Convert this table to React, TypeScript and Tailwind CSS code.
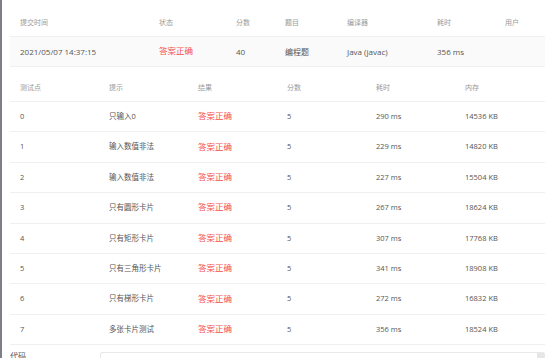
import React from 'react';

const font = { fontFamily: '"Open Sans", "Noto Sans CJK SC", sans-serif' };

const topHead = ['提交时间', '状态', '分数', '题目', '编译器', '耗时', '用户'];

const cases = [
  ['0', '只输入0', '5', '290 ms', '14536 KB'],
  ['1', '输入数值非法', '5', '229 ms', '14820 KB'],
  ['2', '输入数值非法', '5', '227 ms', '15504 KB'],
  ['3', '只有圆形卡片', '5', '267 ms', '18624 KB'],
  ['4', '只有矩形卡片', '5', '307 ms', '17768 KB'],
  ['5', '只有三角形卡片', '5', '341 ms', '18908 KB'],
  ['6', '只有梯形卡片', '5', '272 ms', '16832 KB'],
  ['7', '多张卡片测试', '5', '356 ms', '18524 KB'],
];

const topCols = 'grid grid-cols-[139px_77px_49px_62px_90px_68px_1fr] pl-[10px] items-center';
const caseCols = 'grid grid-cols-[89px_89px_89px_89px_89px_1fr] pl-[10px] items-center';

// red verdict text
const verdict = <span className="text-[8.5px] text-[#f5504f]">答案正确</span>;

export default function App() {
  return (
    <div className="w-[554px] h-[358px] overflow-hidden bg-white flex" style={font}>
      <div className="w-[2px] shrink-0 bg-[#7c7f86]" />
      <div className="w-[535px] ml-[8px] pt-[10px]">
        {/* submission summary */}
        <div className={`${topCols} h-[27px] border-b border-[#f0f0f0] text-[7px] text-[#9a9a9a]`}>
          {topHead.map((h) => (
            <div key={h}>{h}</div>
          ))}
        </div>
        <div className={`${topCols} h-[30px] bg-[#fafafa] border-b border-[#f0f0f0] text-[8px] text-[#555]`}>
          <div>2021/05/07 14:37:15</div>
          <div>{verdict}</div>
          <div>40</div>
          <div>编程题</div>
          <div>Java (javac)</div>
          <div>356 ms</div>
          <div></div>
        </div>

        {/* test cases */}
        <div className={`${caseCols} h-[27px] mt-[8px] border-b border-[#f0f0f0] text-[7px] text-[#9a9a9a]`}>
          <div>测试点</div>
          <div>提示</div>
          <div>结果</div>
          <div>分数</div>
          <div>耗时</div>
          <div>内存</div>
        </div>
        {cases.map((c) => (
          <div key={c[0]} className={`${caseCols} h-[30.4px] border-b border-[#f0f0f0] text-[7.5px] text-[#555]`}>
            <div>{c[0]}</div>
            <div>{c[1]}</div>
            <div>{verdict}</div>
            <div>{c[2]}</div>
            <div>{c[3]}</div>
            <div>{c[4]}</div>
          </div>
        ))}

        {/* code area */}
        <div className="flex mt-[7px]">
          <div className="w-[90px] text-[8px] text-[#555] leading-none">代码</div>
          <div className="flex-1 h-[30px] border border-[#e8e8e8] rounded-[2px] relative">
            <div className="absolute right-0 top-0 w-[7px] h-[7px] bg-[#e6e6e6]" />
          </div>
        </div>
      </div>
    </div>
  );
}
